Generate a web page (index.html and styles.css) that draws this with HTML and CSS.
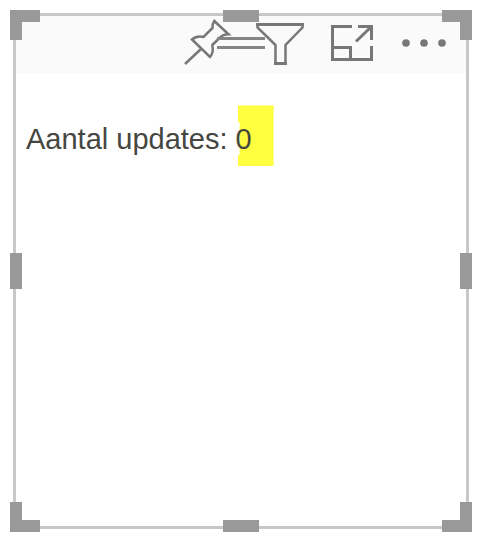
FILE: index.html
```html
<!DOCTYPE html>
<html lang="nl">
<head>
<meta charset="utf-8">
<meta name="viewport" content="width=device-width, initial-scale=1">
<title>Aantal updates</title>
<link rel="stylesheet" href="styles.css">
</head>
<body>
<main class="visual">
  <header class="toolbar">
    <span class="grip"></span>
    <button class="tool" type="button" aria-label="Vastmaken">
      <svg viewBox="0 0 48 48"><path d="M30.300 2 44.500 15.300C40 15.200 38 16.500 35.500 19L28.300 26C29.300 31 28.800 35 26 38L8 20.500C11.500 17.500 15 17 19.500 18L28.500 9C28.300 6.500 29 4 30.300 2ZM17 30 1 45"/></svg>
    </button>
    <button class="tool" type="button" aria-label="Filter">
      <svg viewBox="0 0 48 48"><path d="M1.500 5.500V8.500L19.500 26V44.500H29.500V26L46.500 8.500V5.500"/><path class="heavy" d="M0 5.500H48M18 44.500H31"/></svg>
    </button>
    <button class="tool" type="button" aria-label="Focusmodus">
      <svg viewBox="0 0 48 48"><path class="heavy" d="M24 7.500H4.500V40.500H43.500V27M30 7.500H43.500V21M4.500 28.500H22.500V40.500"/><path class="arrow" d="M28 22.500 43 8"/></svg>
    </button>
    <button class="tool" type="button" aria-label="Meer opties">
      <svg viewBox="0 0 48 48"><g class="dots"><circle cx="6" cy="24" r="3.800"/><circle cx="24" cy="24" r="3.800"/><circle cx="42" cy="24" r="3.800"/></g></svg>
    </button>
  </header>
  <p class="metric">Aantal updates: <span class="value">0</span></p>
  <i class="handle top left corner"></i>
  <i class="handle top middle"></i>
  <i class="handle top right corner"></i>
  <i class="handle center left"></i>
  <i class="handle center right"></i>
  <i class="handle bottom left corner"></i>
  <i class="handle bottom middle"></i>
  <i class="handle bottom right corner"></i>
</main>
</body>
</html>
```

FILE: styles.css
```css
* {
  box-sizing: border-box;
}

body {
  display: flex;
  min-height: 100vh;
  margin: 0;
  padding: 13px 11px 12px 13px;
  background: #fff;
  color: #464640;
  font-family: "Liberation Sans", Arial, sans-serif;
}

.visual {
  position: relative;
  flex: 1;
  border: 3px solid #c8c8c8;
}

.toolbar {
  position: relative;
  display: flex;
  justify-content: flex-end;
  gap: 24px;
  padding: 3px 18px 6px;
  background: #fafafa;
}

.tool {
  width: 48px;
  height: 48px;
  padding: 0;
  border: 0;
  background: none;
}

.tool svg {
  display: block;
  overflow: visible;
  fill: none;
  stroke: #777;
  stroke-width: 2.5;
}

.tool .heavy,
.tool .arrow {
  stroke-width: 3;
}

.tool .dots {
  fill: #777;
  stroke: none;
}

/* Drag grip, centred over the toolbar */
.grip {
  position: absolute;
  top: 21px;
  left: calc(50% - 24px);
  width: 48px;
  height: 12px;
  border: solid #858585;
  border-width: 3px 0;
}

.metric {
  margin: 50px 10px 0;
  font-size: 29px;
  line-height: 33px;
}

.value {
  position: relative;
  z-index: 0;
}

.value::before {
  content: "";
  position: absolute;
  z-index: -1;
  top: -18px;
  left: 2px;
  width: 35px;
  height: 60px;
  border: solid #ffff9c;
  border-width: 1px 1px 0 0;
  background: #ffff40;
  clip-path: polygon(0 0, 100% 0, 100% 100%, 0 100%, 0 50px, 2px 50px, 2px 17px, 0 17px);
}

/* Selection handles sit over the frame */
.handle {
  position: absolute;
  width: 12px;
  height: 12px;
  background: #999;
}

.top { top: -6px; }
.bottom { bottom: -6px; }
.left { left: -6px; }
.right { right: -6px; }

.middle {
  left: calc(50% - 18px);
  width: 36px;
}

.center {
  top: calc(50% - 18px);
  height: 36px;
}

.corner {
  width: 30px;
  height: 30px;
  border: 0 solid #999;
  background: none;
}

.corner.top { border-top-width: 12px; }
.corner.bottom { border-bottom-width: 12px; }
.corner.left { border-left-width: 12px; }
.corner.right { border-right-width: 12px; }
```
